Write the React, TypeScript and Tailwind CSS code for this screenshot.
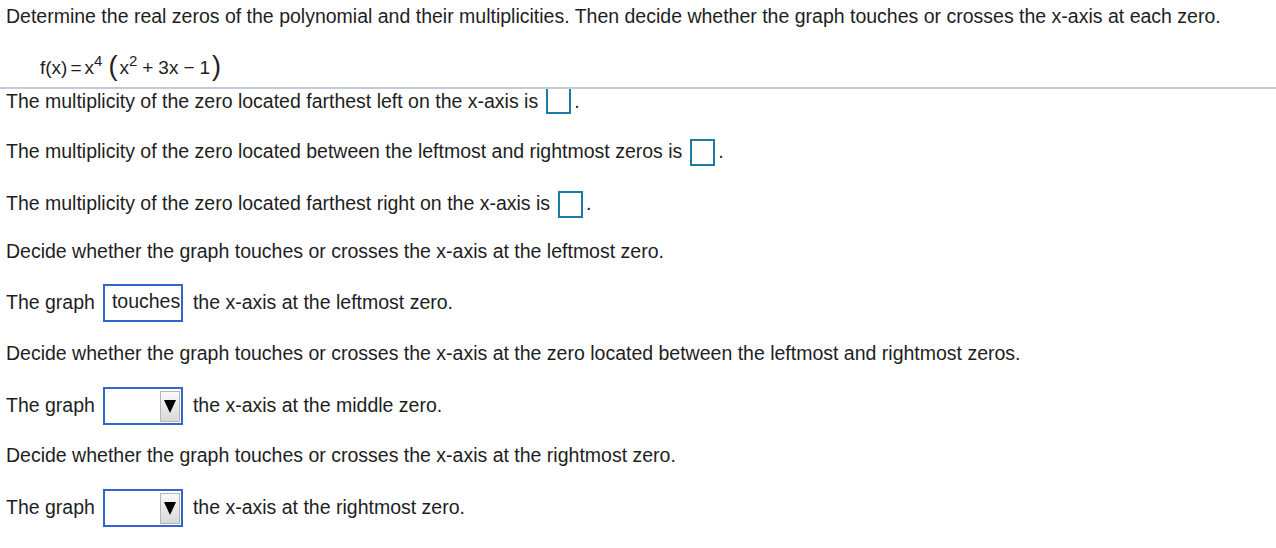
import React from "react";

function AnswerBox() {
  return <span className="inline-block w-[25px] h-[27px] border-2 border-[#1c7ba5] bg-white mx-[8px] mr-[3px]" />;
}

function Dropdown({ value }: { value?: string }) {
  if (value) {
    return (
      <span className="inline-flex items-center w-[80px] h-[38px] border-2 border-[#3366cc] bg-white pl-[7px] mx-[8px] mr-[10px] pb-[3px]">
        {value}
      </span>
    );
  }
  return (
    <span className="inline-flex items-center justify-end w-[80px] h-[38px] border-2 border-[#3366cc] bg-white pr-px mx-[8px] mr-[10px]">
      <span className="flex items-center justify-center w-[20px] h-[31px] border border-[#b5b5b5] bg-gradient-to-b from-[#f8f8f8] to-[#d9d9d9]">
        <svg width="12" height="13" viewBox="0 0 12 13">
          <path d="M0 0 H12 L6 13 Z" fill="#000" />
        </svg>
      </span>
    </span>
  );
}

export default function App() {
  return (
    <div className="w-[1276px] h-[548px] bg-white text-[#1e1e1e] text-[19.5px] leading-none overflow-hidden" style={{ fontFamily: '"Liberation Sans", Arial, sans-serif' }}>
      {/* Question */}
      <div className="pl-[6px] h-[34px] flex items-center">
        Determine the real zeros of the polynomial and their multiplicities. Then decide whether the graph touches or crosses the x-axis at each zero.
      </div>
      <div className="pl-[40px] h-[26px] mt-[20px] flex items-center text-[19px]">
        <span>f(x)</span>
        <span className="mx-[3px]">=</span>
        <span>x</span>
        <sup className="text-[15px] -top-[6px] mr-[6px]">4</sup>
        <span className="text-[27px] leading-none mr-[2px] -mt-[2px]">(</span>
        <span>x</span>
        <sup className="text-[15px] -top-[6px] mr-[5px]">2</sup>
        <span className="mr-[5px]">+</span>
        <span>3x</span>
        <span className="mx-[5px]">−</span>
        <span>1</span>
        <span className="text-[27px] leading-none ml-[2px] -mt-[2px]">)</span>
      </div>
      <div className="h-[2px] mt-[7px] bg-[#c6cad8]" />

      {/* Answers */}
      <div className="pl-[6px] flex flex-col">
        <div className="h-[25px] flex items-center">
          The multiplicity of the zero located farthest left on the x-axis is
          <span className="inline-block w-[25px] h-[25px] border-2 border-t-0 border-[#1c7ba5] ml-[8px] mr-[3px]" />.
        </div>
        <div className="h-[38px] mt-[19px] flex items-center">
          The multiplicity of the zero located between the leftmost and rightmost zeros is
          <AnswerBox />.
        </div>
        <div className="h-[38px] mt-[14px] flex items-center">
          The multiplicity of the zero located farthest right on the x-axis is
          <AnswerBox />.
        </div>
        <div className="h-[38px] mt-[10px] flex items-center">
          Decide whether the graph touches or crosses the x-axis at the leftmost zero.
        </div>
        <div className="h-[38px] mt-[13px] flex items-center">
          The graph
          <Dropdown value="touches" />
          the x-axis at the leftmost zero.
        </div>
        <div className="h-[38px] mt-[13px] flex items-center">
          Decide whether the graph touches or crosses the x-axis at the zero located between the leftmost and rightmost zeros.
        </div>
        <div className="h-[38px] mt-[14px] flex items-center">
          The graph
          <Dropdown />
          the x-axis at the middle zero.
        </div>
        <div className="h-[38px] mt-[12px] flex items-center">
          Decide whether the graph touches or crosses the x-axis at the rightmost zero.
        </div>
        <div className="h-[38px] mt-[14px] flex items-center">
          The graph
          <Dropdown />
          the x-axis at the rightmost zero.
        </div>
      </div>
    </div>
  );
}
